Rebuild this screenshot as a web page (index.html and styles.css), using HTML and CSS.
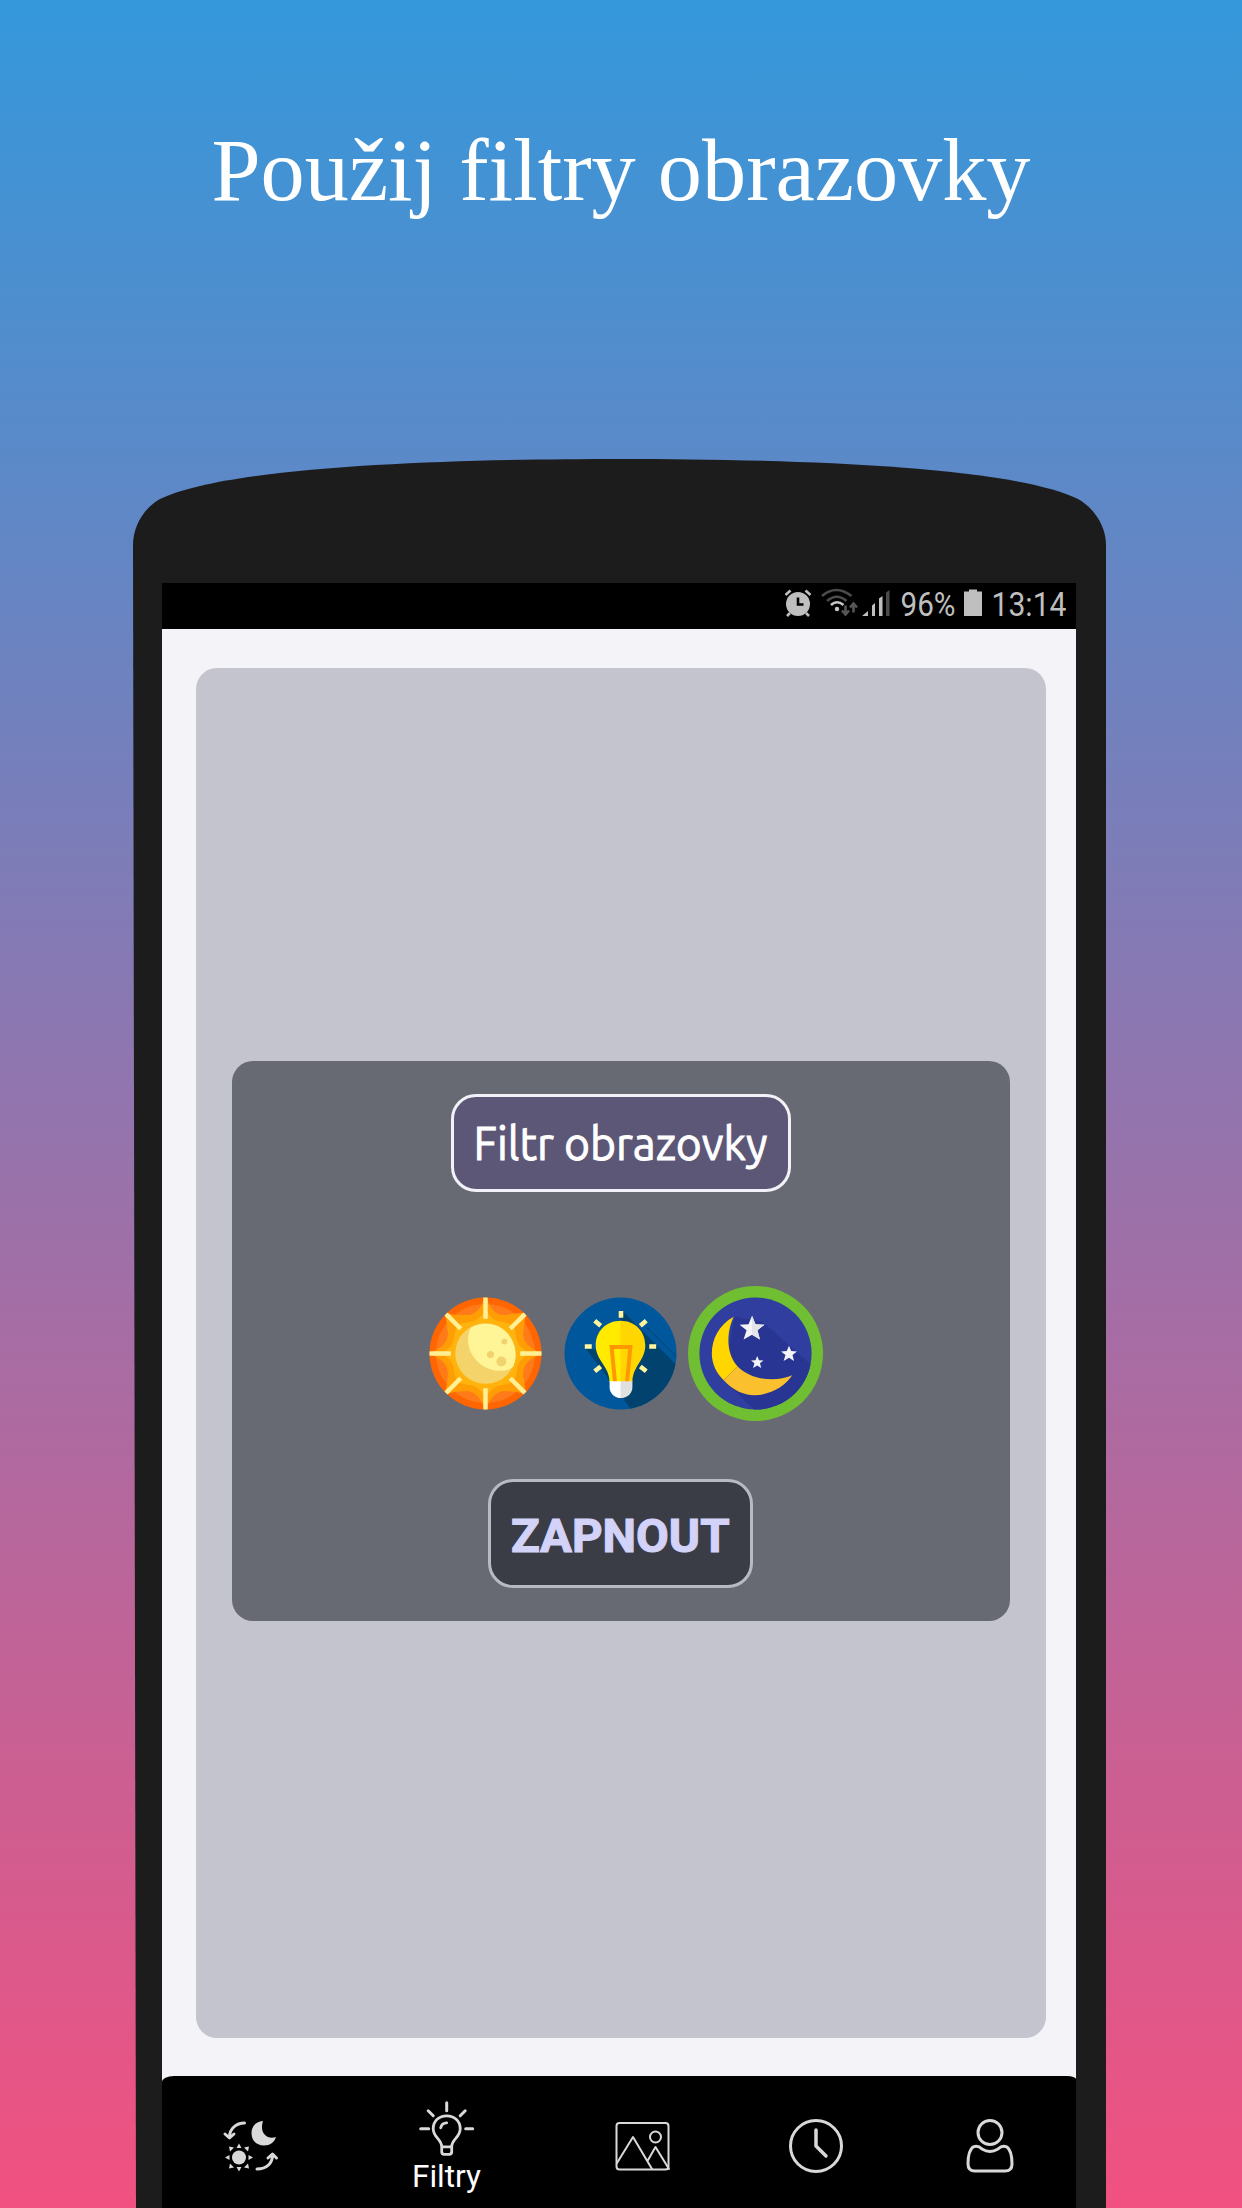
FILE: index.html
```html
<!DOCTYPE html>
<html lang="cs">
<head>
<meta charset="utf-8">
<title>Filtry obrazovky</title>
<link rel="stylesheet" href="styles.css">
</head>
<body>
<main class="promo">
  <h1 class="headline"><svg class="headline-svg" viewBox="0 0 1242 130"><text x="211.500" y="90" textLength="819" lengthAdjust="spacingAndGlyphs">Použij filtry obrazovky</text></svg></h1>
  <section class="phone">
    <svg class="phone-body" viewBox="0 0 980 1750" preserveAspectRatio="none" aria-hidden="true">
      <path d="M4 1750 L1 86 C1 67 12 49 28 40 C99 6 330 0 488 0 C646 0 877 6 946 40 C962 49 974 67 974 86 L974 1750Z" fill="#1c1c1c"/>
    </svg>
    <div class="screen">
      <header class="status">
        <svg class="status-icons" viewBox="0 0 110 30" aria-hidden="true">
          <g fill="#bfbfbf" stroke="#bfbfbf">
            <circle cx="15" cy="16" r="12" stroke="none"/>
            <path d="M2.500 7 L7.500 2.500 M27.500 7 L22.500 2.500 M7 25 L4 28 M23 25 L26 28" stroke-width="2.600" fill="none"/>
            <path d="M15 9.500 V16.500 H20.500" stroke="#000" stroke-width="2.600" fill="none"/>
          </g>
          <g fill="none" stroke-width="2.600">
            <path d="M39 8 Q53 -4 68.500 8 M44 13 Q54 4.500 63.500 13" stroke="#4b4b4b"/>
            <path d="M48 17 Q54 11.500 60.500 17" stroke="#c8c8c8"/>
            <path d="M62.500 17.500 V26.500 M59 22.500 L62.500 26.500 L66 22.500 M70.500 24.500 V15.500 M67 19.500 L70.500 15.500 L74 19.500" stroke="#555"/>
          </g>
          <circle cx="54" cy="21" r="2.200" fill="#c8c8c8"/>
          <path d="M79 28 L85 23 V28Z M89 28 V17.500 L92 15 V28Z M96 28 V10.500 L99.500 8 V28Z" fill="#bfbfbf"/>
          <path d="M103 28 V4.500 L106.500 2 V28Z" fill="#4b4b4b"/>
        </svg>
        <svg class="status-text" viewBox="0 0 176 46">
          <text x="0.500" y="32.500" textLength="55" lengthAdjust="spacingAndGlyphs">96%</text>
          <path d="M64 8.500 H69 V6.500 H77 V8.500 H82 V33 H64Z" fill="#bfbfbf"/>
          <text x="91.500" y="32.500" textLength="75" lengthAdjust="spacingAndGlyphs">13:14</text>
        </svg>
      </header>
      <div class="content">
        <div class="card">
          <div class="panel">
            <div class="label"><svg viewBox="0 0 334 92"><text x="19.500" y="62.500" textLength="294" lengthAdjust="spacingAndGlyphs">Filtr obrazovky</text></svg></div>
            <div class="filters">
              <svg class="filter" viewBox="0 0 114 114">
                <defs><clipPath id="disc"><circle cx="57" cy="57" r="56.500"/></clipPath></defs>
                <g clip-path="url(#disc)">
                  <rect width="114" height="114" fill="#ff6500"/>
                  <circle cx="57" cy="57" r="50" fill="#ff7a18"/>
                  <path d="M57 -1 Q64 20 78 18 Q92 16 98 16 Q96 27 95 37 Q95 50 115 57 Q95 64 95 77 Q96 87 98 98 Q87 95 78 95 Q64 94 57 115 Q50 94 36 95 Q27 95 16 98 Q19 87 19 77 Q19 64 -1 57 Q19 50 19 37 Q18 27 16 16 Q27 19 36 18 Q50 20 57 -1Z" fill="#ff9d05"/>
                  <path d="M57 12 Q64 25 73 25 L86 28 L88 41 Q89 50 102 57 Q89 64 89 73 L86 86 L73 89 Q64 89 57 102 Q50 89 41 89 L28 86 L25 73 Q25 64 12 57 Q25 50 25 41 L28 28 L41 25 Q50 25 57 12Z" fill="#ffb30c"/>
                  <path d="M57 0V22M57 92V114M0 57H22M92 57H114M17 17 L32 32M82 82 L97 97M17 97 L32 82M82 32 L97 17" stroke="#fff096" stroke-width="4.500"/>
                  <circle cx="57" cy="57" r="30.500" fill="#f5d36b"/>
                  <path d="M42 31 C54 24 71 26 80 38 C88 48 89 61 85 70 C78 77 61 76 50 66 C39 56 37 43 42 31Z" fill="#fff496"/>
                  <g fill="#f0d36e"><circle cx="62" cy="58" r="3.600"/><circle cx="76" cy="45" r="3"/><circle cx="73" cy="65" r="5"/></g>
                </g>
              </svg>
              <svg class="filter" viewBox="0 0 114 114">
                <g clip-path="url(#disc)">
                  <rect width="114" height="114" fill="#01579b"/>
                  <path d="M59 14 L119 74 V130 H80 L22 52 L40 54 L60 18Z" fill="#01426f"/>
                  <path d="M83 30 L114 61" stroke="#014d86" stroke-width="1.500"/>
                </g>
                <path d="M57.500 14V21M31 24 L37 29M83 24 L77 29M21 50H28M86 50H93M31 75 L37 70M83 75 L77 70" stroke="#fff59d" stroke-width="4.600"/>
                <path d="M57.500 24 C42 24 32 35 32 49 C32 64 46 70 46 86 H57.500Z" fill="#ffea00"/>
                <path d="M57 24 C72 24 82 35 82 49 C82 64 69 70 69 86 H57Z" fill="#ffd600"/>
                <path d="M51.500 86 L48 50.500 H67 L63.500 86" fill="none" stroke="#ff9800" stroke-width="4"/>
                <path d="M46 85 H57.500 V102 C51 102 46 97 46 91Z" fill="#fff"/>
                <path d="M57 85 H69 V91 C69 97 64 102 57 102Z" fill="#e0e0e0"/>
              </svg>
              <svg class="filter filter-active" viewBox="0 0 136 136">
                <circle cx="68" cy="68" r="68" fill="#70bf32"/>
                <g transform="translate(11 11)">
                  <circle cx="57" cy="57" r="56.500" fill="#303f9f"/>
                  <path clip-path="url(#disc)" d="M36 20 L64 25 L113 68 V114 H56 L24 83Z" fill="#283593"/>
                  <path d="M35 20 C20 28 13 43 13 57 C13 68 18 77 25 84 L39 70 C28 58 27 37 35 20Z" fill="#ffd600"/>
                  <path d="M39 70 L25 84 C34 94 45 99 56 99 C72 99 87 90 94 79 C77 86 53 84 39 70Z" fill="#fbc02d"/>
                  <g fill="#f5f5f8"><path id="star" d="M53.500 19 L57 27.500 L66 28 L59 33.500 L61.500 43 L53.500 38 L45 43 L48 33.500 L41 28 L50 27.500Z"/>
                  <use href="#star" transform="translate(56.500 37) scale(.64)"/><use href="#star" transform="translate(32 50) scale(.5)"/></g>
                  <path d="M53.500 19 L57 27.500 L66 28 L59 33.500 L61.500 43 L53.500 38Z" fill="#e4e4e8"/>
                </g>
              </svg>
            </div>
            <div class="action"><svg viewBox="0 0 260 104"><text x="20" y="70.500" textLength="219.500" lengthAdjust="spacingAndGlyphs">ZAPNOUT</text></svg></div>
          </div>
        </div>
      </div>
      <nav class="nav">
        <svg viewBox="0 0 914 132">
          <g fill="none" stroke="#d9d9d9" stroke-width="3" stroke-linecap="round" stroke-linejoin="round">
            <path d="M82.500 47 C74 47 67.500 53 67.500 61 M63 58 L67.500 62 L72 58" />
            <path d="M95 93 C105 93 110.500 87 110.500 79 M106 82 L110.500 78 L114.500 82"/>
            <g transform="translate(37.700 .8)">
              <path d="M247 26V34M228.500 34 L233.500 39M265.500 34 L260.500 39M221 52H229M266 52H273" />
              <path d="M242 70 C242 62 233.500 61 233.500 52 C233.500 44 239.500 39 247 39 C254.500 39 260.500 44 260.500 52 C260.500 61 252 62 252 70Z M242 70V75Q242 77.500 244.500 77.500H249.500Q252 77.500 252 75V70M241 51Q242 46 247 46" stroke-width="2.800"/>
            </g>
            <rect x="454.500" y="47" width="52" height="46.500" rx="3" stroke-width="2"/>
            <path d="M455 87 L471 61 L490 93M485.500 85 L493.500 71 L507 93" stroke-width="2"/>
            <circle cx="493.500" cy="61" r="5.500" stroke-width="2"/>
            <circle cx="654" cy="70" r="25.500"/>
            <path d="M654 54V70L664 80" stroke-width="3.500"/>
            <circle cx="828" cy="56.500" r="12"/>
            <path d="M811 71 C815 69 818 71 820 73 C825 76 831 76 836 73 C838 71 841 69 845 71 C849 74 850 83 850 88 C850 93 847 95 843 95 H813 C809 95 806 93 806 88 C806 83 807 74 811 71Z"/>
          </g>
          <g fill="#d9d9d9">
            <path d="M101 45 C92 46 89.500 52 89.500 57 C89.500 65 95 69.500 102 69.500 C108 69.500 112.500 66 114 61 C105 64 97 57 101 45Z"/>
            <circle cx="77" cy="81.500" r="7"/>
            <path d="M74.500 72h5l-2.500-4.500zM74.500 91h5l-2.500 4.500zM67.500 79v5l-4.500-2.500zM86.500 79v5l4.500-2.500zM68 75.500l4-4-5-1zM86 75.500l-4-4 5-1zM68 87.500l4 4-5 1zM86 87.500l-4 4 5 1z"/>
          </g>
          <text x="250" y="111" textLength="69" lengthAdjust="spacingAndGlyphs">Filtry</text>
        </svg>
      </nav>
    </div>
  </section>
</main>
</body>
</html>
```
FILE: styles.css
```css
* { box-sizing: border-box; }
body { margin: 0; }
svg { display: block; }
.promo {
  width: 1242px;
  height: 2208px;
  overflow: hidden;
  background: linear-gradient(#3498db, #f15180);
}
.headline { margin: 0; padding-top: 110px; height: 459px; }
.headline-svg { width: 1242px; height: 130px; }
.headline text { font: 400 88px "Liberation Serif", serif; fill: #fff; }
.phone { position: relative; width: 980px; height: 1749px; margin-left: 132px; padding: 124px 0 0 30px; }
.phone-body { position: absolute; left: 0; top: 0; width: 980px; height: 1750px; }
.screen { position: relative; width: 914px; height: 1625px; display: flex; flex-direction: column; background: #f4f3f8; }
.status { display: flex; justify-content: flex-end; flex: none; height: 46px; background: #000; }
.status-icons { width: 110px; height: 30px; margin: 5px 7px 0 0; }
.status-text { width: 176px; height: 46px; }
.status text { font: 400 34px Roboto, sans-serif; fill: #bfbfbf; }
.content { flex: 1; padding: 39px 30.5px 38px 33.5px; }
.card { height: 100%; display: flex; align-items: center; justify-content: center; border-radius: 21px; background: #c4c4ce; }
.panel { width: 778px; height: 560px; margin-bottom: 24px; padding-top: 33px; display: flex; flex-direction: column; align-items: center; border-radius: 21px; background: #686a73; }
.label { width: 340px; height: 98px; border: 3px solid #f2f1f8; border-radius: 25px; background: #5d5777; }
.label text { font: 400 46px Ubuntu, "Noto Sans", sans-serif; fill: #fff; stroke: #fff; stroke-width: 0.9px; }
.filters { display: flex; align-items: center; height: 135px; margin: 94px 0 58px 11px; gap: 22px; }
.filter { width: 113px; height: 113px; }
.filter-active { width: 135px; height: 135px; margin-left: -11px; }
.action { width: 265px; height: 109px; border: 3px solid #b9b9c2; border-radius: 25px; background: #3a3c46; }
.action text { font: 700 47px Roboto, sans-serif; fill: #d3d2f8; stroke: #d3d2f8; stroke-width: 1.2px; }
.nav { flex: none; height: 132px; border-radius: 12px 9px 0 0 / 6px 3px 0 0; background: #000; }
.nav text { font: 400 32px Roboto, sans-serif; fill: #fff; }
```
